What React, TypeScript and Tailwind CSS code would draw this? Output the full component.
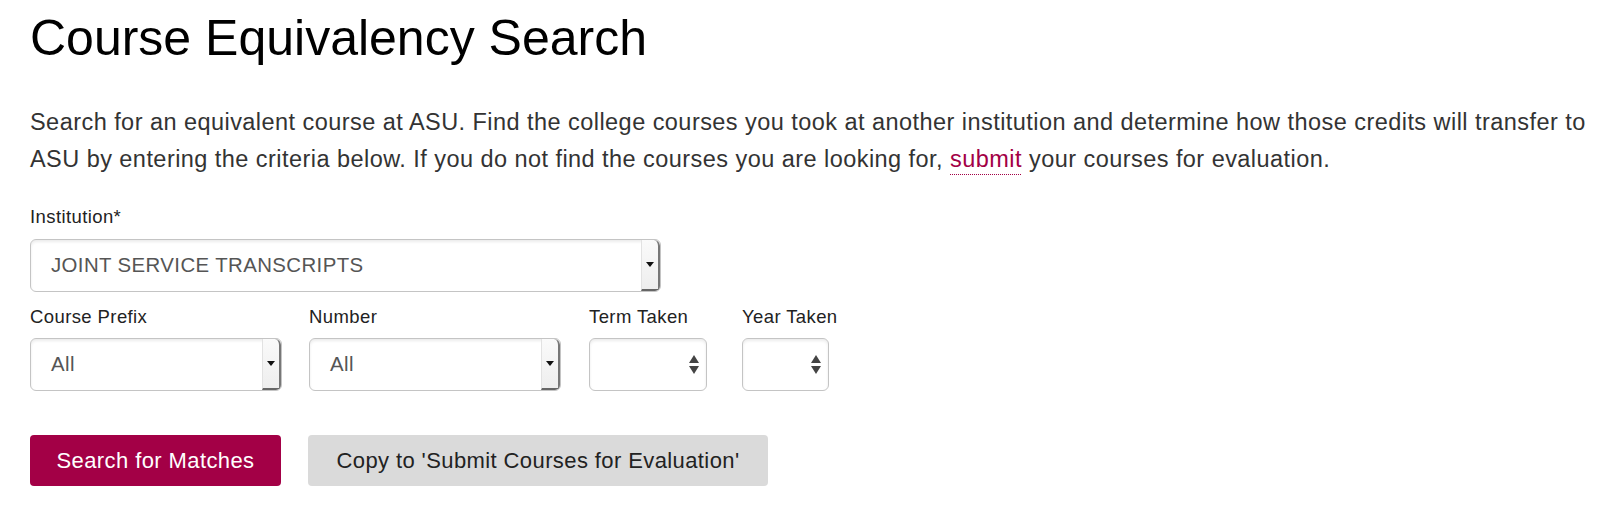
import { ReactNode } from "react";

const font = { fontFamily: '"Liberation Sans", Arial, sans-serif' };

function SelectBox({ value, width, spinner }: { value?: string; width: string; spinner?: boolean }) {
    if (spinner) {
        return (
            <div className={`${width} h-[53px] flex items-center justify-end pr-[7px] rounded-[6px] border border-[#c4c4c4] bg-white shadow-[inset_0_2px_3px_rgba(0,0,0,0.08)]`}>
                <div className="flex flex-col items-center gap-[3px]">
                    <span className="block w-0 h-0 border-l-[5px] border-r-[5px] border-b-[8px] border-l-transparent border-r-transparent border-b-[#444]" />
                    <span className="block w-0 h-0 border-l-[5px] border-r-[5px] border-t-[8px] border-l-transparent border-r-transparent border-t-[#444]" />
                </div>
            </div>
        );
    }
    return (
        <div className={`${width} h-[53px] flex rounded-[6px] border border-[#c4c4c4] bg-white shadow-[inset_0_2px_3px_rgba(0,0,0,0.08)] overflow-hidden`}>
            <div className="flex-1 flex items-center pl-[20px] pb-[1px] text-[20.4px] tracking-[0.4px] text-[#555]">{value}</div>
            {/* native-looking dropdown button */}
            <div className="w-[19px] flex items-center justify-center bg-gradient-to-b from-[#fafafa] to-[#eeeeee] border-l border-[#e2e2e2] border-r-[2px] border-r-[#777] border-b-[2px] border-b-[#666] rounded-tr-[6px]">
                <span className="block w-0 h-0 border-l-[4px] border-r-[4px] border-t-[5px] border-l-transparent border-r-transparent border-t-[#111]" />
            </div>
        </div>
    );
}

function Field({ label, gap, children }: { label: string; gap: string; children: ReactNode }) {
    return (
        <div className="flex flex-col">
            <label className={`text-[18.5px] leading-[22px] tracking-[0.4px] text-[#222] ${gap}`}>{label}</label>
            {children}
        </div>
    );
}

export default function App() {
    return (
        <div className="bg-white min-h-[526px] pl-[30px] pr-[8px] pt-[11px] text-black" style={font}>
            <h1 className="text-[50px] leading-[55px] font-normal">Course Equivalency Search</h1>

            <p className="mt-[38px] text-[23.5px] leading-[37px] tracking-[0.45px] text-[#333]">
                Search for an equivalent course at ASU. Find the college courses you took at another institution and determine how those credits will transfer to ASU by entering the criteria below. If you do not find the courses you are looking for,{" "}
                <a href="#" className="text-[#a30046] underline decoration-dotted decoration-1 underline-offset-[7px]">submit</a>{" "}
                your courses for evaluation.
            </p>

            <div className="mt-[28px]">
                <Field label="Institution*" gap="mb-[11px]">
                    <SelectBox value="JOINT SERVICE TRANSCRIPTS" width="w-[631px]" />
                </Field>
            </div>

            <div className="mt-[14px] flex">
                <div className="mr-[27px]">
                    <Field label="Course Prefix" gap="mb-[10px]">
                        <SelectBox value="All" width="w-[252px]" />
                    </Field>
                </div>
                <div className="mr-[28px]">
                    <Field label="Number" gap="mb-[10px]">
                        <SelectBox value="All" width="w-[252px]" />
                    </Field>
                </div>
                <div className="mr-[35px]">
                    <Field label="Term Taken" gap="mb-[10px]">
                        <SelectBox width="w-[118px]" spinner />
                    </Field>
                </div>
                <Field label="Year Taken" gap="mb-[10px]">
                    <SelectBox width="w-[87px]" spinner />
                </Field>
            </div>

            <div className="mt-[44px] flex gap-[27px]">
                <button className="w-[251px] h-[51px] rounded-[4px] bg-[#a30046] text-white text-[22px] tracking-[0.4px]">Search for Matches</button>
                <button className="w-[460px] h-[51px] rounded-[4px] bg-[#dadada] text-[#222] text-[22px] tracking-[0.4px]">Copy to 'Submit Courses for Evaluation'</button>
            </div>
        </div>
    );
}
